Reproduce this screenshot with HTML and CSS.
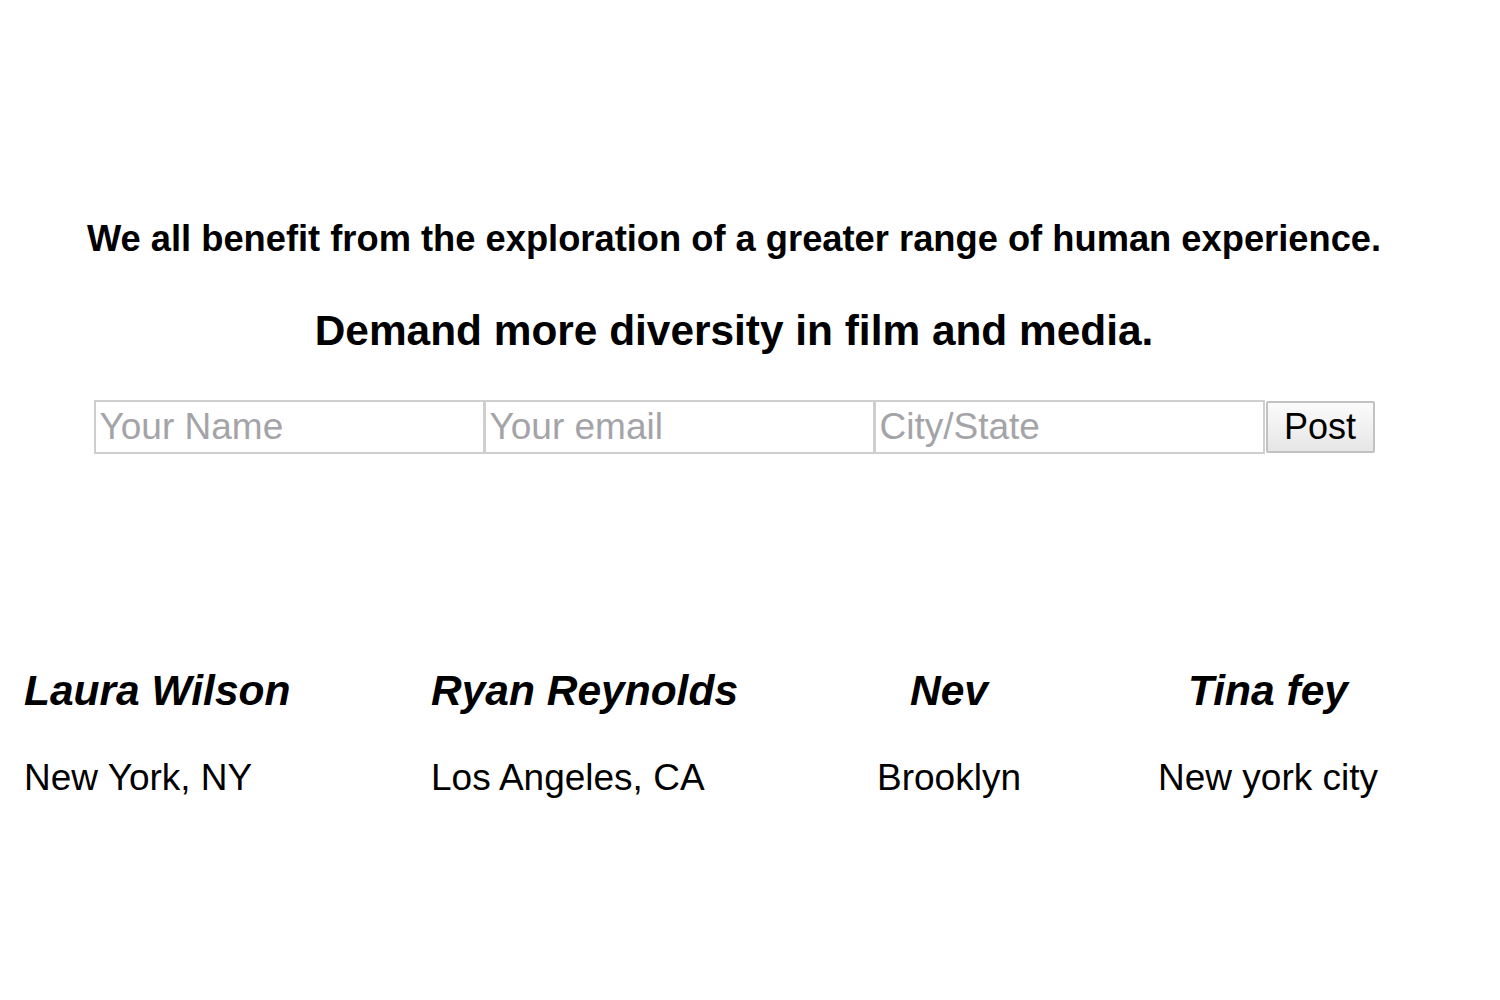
FILE: index.html
```html
<!DOCTYPE html>
<html>
<head>
<meta charset="utf-8">
<link rel="stylesheet" href="styles.css">
</head>
<body>
<div class="page">
  <p class="lead">We all benefit from the exploration of a greater range of human experience.</p>
  <p class="cta">Demand more diversity in film and media.</p>
  <form class="signup">
    <input class="field" type="text" placeholder="Your Name">
    <input class="field" type="text" placeholder="Your email">
    <input class="field" type="text" placeholder="City/State">
    <button class="post" type="button">Post</button>
  </form>
  <div class="signers">
    <div class="signer first"><div class="name">Laura Wilson</div><div class="city">New York, NY</div></div>
    <div class="signer second"><div class="name">Ryan Reynolds</div><div class="city">Los Angeles, CA</div></div>
    <div class="signer third"><div class="name">Nev</div><div class="city">Brooklyn</div></div>
    <div class="signer fourth"><div class="name">Tina fey</div><div class="city">New york city</div></div>
  </div>
</div>
</body>
</html>
```

FILE: styles.css
```css
html, body {
  margin: 0;
  padding: 0;
  background: #ffffff;
}
body {
  font-family: "Liberation Sans", Arial, Helvetica, sans-serif;
  color: #000;
}
.page {
  width: 1468px;
  padding-top: 217px;
}
.lead {
  margin: 0;
  font-size: 36.3px;
  line-height: 44px;
  font-weight: bold;
  text-align: center;
}
.cta {
  margin: 46px 0 0;
  font-size: 42.4px;
  line-height: 48px;
  font-weight: bold;
  text-align: center;
}
.signup {
  display: flex;
  justify-content: center;
  align-items: center;
  margin-top: 45px;
}
.field {
  box-sizing: border-box;
  width: 391px;
  height: 54px;
  margin: 0;
  padding: 0 4px;
  border: 2px solid #cfcfcf;
  font-family: "Liberation Sans", Arial, sans-serif;
  font-size: 37px;
  color: #000;
  background: #fff;
  outline: none;
}
.field + .field {
  margin-left: -1px;
}
.field::placeholder {
  color: #a4a4a8;
}
.post {
  box-sizing: border-box;
  width: 109px;
  height: 52px;
  margin-left: 1px;
  padding: 0;
  border: 2px solid #c2c2c2;
  border-radius: 2px;
  background: linear-gradient(#fbfbfb, #e6e6e6);
  font-family: "Liberation Sans", Arial, sans-serif;
  font-size: 36px;
  color: #000;
}
.signers {
  display: flex;
  margin-top: 212px;
}
.signer {
  flex: none;
  box-sizing: border-box;
}
.first {
  width: 431px;
  padding-left: 24px;
  text-align: left;
}
.second {
  width: 389px;
  text-align: left;
}
.third {
  width: 258px;
  text-align: center;
}
.fourth {
  width: 380px;
  text-align: center;
}
.name {
  font-size: 42.5px;
  line-height: 50px;
  font-weight: bold;
  font-style: italic;
}
.city {
  margin-top: 40px;
  font-size: 37px;
  line-height: 44px;
}
```
